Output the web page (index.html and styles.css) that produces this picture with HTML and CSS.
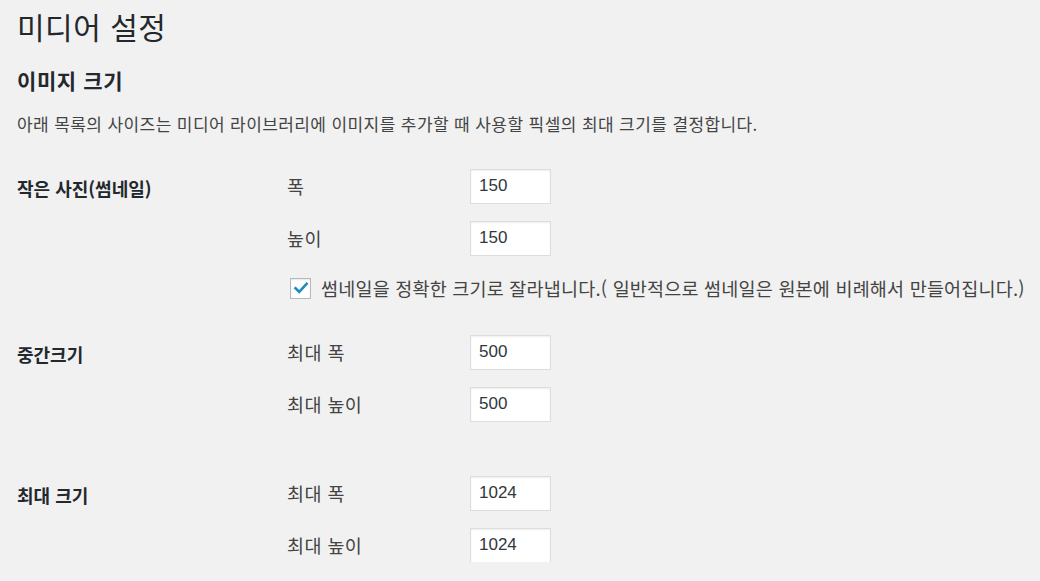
FILE: index.html
```html
<!DOCTYPE html>
<html lang="ko">
<head>
    <meta charset="UTF-8">
    <title>미디어 설정</title>
    <link rel="stylesheet" href="styles.css">
</head>
<body>
    <div class="wrap">
        <h1>미디어 설정</h1>

        <h2>이미지 크기</h2>
        <p class="desc">아래 목록의 사이즈는 미디어 라이브러리에 이미지를 추가할 때 사용할 픽셀의 최대 크기를 결정합니다.</p>

        <!-- Thumbnail -->
        <div class="form-row row-thumb">
            <div class="row-title">작은 사진(썸네일)</div>
            <div class="row-fields">
                <div class="field">
                    <label for="thumb-w">폭</label>
                    <input id="thumb-w" type="text" value="150">
                </div>
                <div class="field">
                    <label for="thumb-h">높이</label>
                    <input id="thumb-h" type="text" value="150">
                </div>
                <div class="check-line">
                    <span class="checkbox">
                        <svg width="16" height="16" viewBox="0 0 16 16"><path d="M2.5 8.3 L6.2 11.8 L13.6 3.8" fill="none" stroke="#1e8cbe" stroke-width="2.6" stroke-linecap="square"/></svg>
                    </span>
                    <span>썸네일을 정확한 크기로 잘라냅니다.( 일반적으로 썸네일은 원본에 비례해서 만들어집니다.)</span>
                </div>
            </div>
        </div>

        <!-- Medium -->
        <div class="form-row row-medium">
            <div class="row-title">중간크기</div>
            <div class="row-fields">
                <div class="field">
                    <label for="med-w">최대 폭</label>
                    <input id="med-w" type="text" value="500">
                </div>
                <div class="field">
                    <label for="med-h">최대 높이</label>
                    <input id="med-h" type="text" value="500">
                </div>
            </div>
        </div>

        <!-- Large -->
        <div class="form-row row-large">
            <div class="row-title">최대 크기</div>
            <div class="row-fields">
                <div class="field">
                    <label for="large-w">최대 폭</label>
                    <input id="large-w" type="text" value="1024">
                </div>
                <div class="field">
                    <label for="large-h">최대 높이</label>
                    <input id="large-h" type="text" value="1024">
                </div>
            </div>
        </div>
    </div>
</body>
</html>
```

FILE: styles.css
```css
/* General Styles */
body {
    margin: 0;
    padding: 0;
    background: #f1f1f1;
    color: #444;
    font-family: "Noto Sans CJK KR", "Noto Sans", sans-serif;
    font-size: 17px;
}

.wrap {
    padding: 0 0 0 17px;
}

/* Headings */
h1 {
    margin: 6px 0 0;
    font-size: 30px;
    font-weight: 400;
    letter-spacing: 0.5px;
    line-height: 40px;
    color: #23282d;
}

h2 {
    margin: 20px 0 0;
    font-size: 21px;
    font-weight: 700;
    letter-spacing: 0.6px;
    line-height: 28px;
    color: #23282d;
}

.desc {
    margin: 19px 0 0;
    font-size: 17px;
    letter-spacing: 0.4px;
    line-height: 22px;
}

/* Form rows */
.form-row {
    display: flex;
}

.row-thumb {
    margin-top: 34px;
}

.row-medium {
    margin-top: 32px;
}

.row-large {
    margin-top: 55px;
}

.row-title {
    width: 270px;
    flex-shrink: 0;
    line-height: 38px;
    font-size: 18px;
    font-weight: 700;
    color: #23282d;
}

.row-fields {
    display: flex;
    flex-direction: column;
    gap: 18px;
}

.field {
    display: flex;
    align-items: center;
    height: 34px;
}

.field label {
    width: 183px;
    font-size: 18.5px;
    letter-spacing: 0.4px;
}

.field input {
    box-sizing: border-box;
    width: 81px;
    height: 35px;
    margin: 0;
    padding: 0 8px;
    border: 1px solid #ddd;
    background: #fff;
    box-shadow: inset 0 1px 2px rgba(0,0,0,0.07);
    font-family: "Liberation Sans", "Noto Sans", sans-serif;
    font-size: 17px;
    color: #32373c;
    outline: none;
}

/* Checkbox */
.check-line {
    display: flex;
    align-items: center;
    height: 30px;
    margin-left: 3px;
    font-size: 18.5px;
    letter-spacing: 0.2px;
    white-space: nowrap;
}

.checkbox {
    box-sizing: border-box;
    display: flex;
    align-items: center;
    justify-content: center;
    width: 21px;
    height: 21px;
    margin-right: 10px;
    border: 1px solid #b4b9be;
    background: #fff;
    box-shadow: inset 0 1px 2px rgba(0,0,0,0.1);
}
```
